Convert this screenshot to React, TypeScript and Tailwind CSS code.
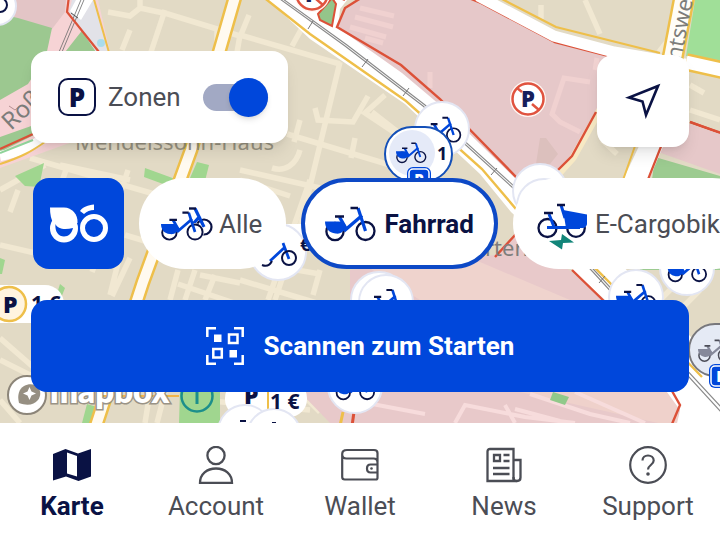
import React, { useState } from 'react';

const NAVY = '#0a1244';
const BLUE = '#0047db';

function Bike({ x, y, s = 1, dark = NAVY, blue = BLUE }: { x: number; y: number; s?: number; dark?: string; blue?: string }) {
  return (
    <g transform={`translate(${x} ${y}) scale(${s})`} fill="none" strokeWidth="2.3">
      <circle cx="10" cy="25.5" r="8.6" stroke={dark} />
      <circle cx="40.5" cy="25" r="9" stroke={dark} />
      <path d="M0 15.5h14c5 0 7 3 7.500 6.500l-3 3c-2 2-5 3-8 2.500C4 27 0 22 0 15.500Z" fill={blue} />
      <path d="M14.500 11 21 22.500M19 25 37 9.500" stroke={blue} strokeWidth="3.400" />
      <path d="M33 2 40.500 25" stroke={blue} strokeWidth="3.200" />
      <path d="M10 10.500h9M25.500 2h7.500" stroke={dark} strokeWidth="2.700" />
    </g>
  );
}

function Pin({ x, y, r = 27, bike = true, s = 0.72 }: { x: number; y: number; r?: number; bike?: boolean; s?: number }) {
  return (
    <g>
      <circle cx={x} cy={y} r={r} fill="#fff" stroke="#e3e6f3" strokeWidth="2" />
      {bike && <Bike x={x - 25 * s} y={y - 17 * s} s={s} />}
    </g>
  );
}

function NoParking({ x, y }: { x: number; y: number }) {
  return (
    <g>
      <circle cx={x} cy={y} r="18" fill="#fff7f3" />
      <circle cx={x} cy={y} r="15.500" fill="#fff" stroke="#e0533f" strokeWidth="2.500" />
      <path d={`M${x - 11} ${y - 11}l5 4M${x + 4} ${y + 5}l7 6`} stroke="#e0533f" strokeWidth="2.500" />
      <text x={x} y={y + 8} textAnchor="middle" fontSize="22" fontWeight="800" fill="#16205c" className="font-['Open_Sans',sans-serif]">P</text>
    </g>
  );
}

function Badge({ x, y }: { x: number; y: number }) {
  return (
    <g>
      <rect x={x - 12} y={y - 12} width="24" height="24" rx="6" fill={BLUE} />
      <rect x={x - 10} y={y - 10} width="20" height="20" rx="4" fill={BLUE} stroke="#fff" strokeWidth="1.500" />
      <text x={x} y={y + 6} textAnchor="middle" fontSize="15" fontWeight="800" fill="#fff" className="font-['Open_Sans',sans-serif]">P</text>
    </g>
  );
}

function CityMap() {
  return (
    <svg className="absolute inset-0 h-full w-full font-['Noto_Sans',sans-serif]" viewBox="0 0 720 423" preserveAspectRatio="xMidYMin slice" aria-hidden="true">
      <rect width="720" height="423" fill="#e2dac5" />

      {/* minor streets */}
      <g fill="none" stroke="#f1e8d2" strokeWidth="5.500">
        <path d="M108 12l22 4 10-8 28 6 72 22M165 10l-14 42M140 0v9M130 30l-8 20M217 30v22" />
        <path d="M240 35l100 29M340 62l-28 116-22 90M302 28l-10 18M249 15l-9 22M240 35l-12 70" />
        <path d="M315 108l3 12 35 2 15-26M385 95l-20 18 30 20M372 112l36 28M287 134l153 46M300 120l-6 22M355 138l-4 20M300 150c-4 15-15 22-28 18" />
        <path d="M585 0l15 34M541 5v14M676 30l-17 22M690 85l14 8M690 110l30 10M602 140l15 14" />
        <path d="M30 158l145 42M0 190l45-25M60 165l70 15M18 190l-8 22M66 170l-8 22M0 245l35 8M128 170l-20 60-16 42M0 338l40 35M0 360l32 16M0 400l20 23" />
        <path d="M125 235l20 6M130 258l-18 38M120 255l-10 40M178 270l-8 30M195 270l-10 30M178 284l65 22M215 275l-10 25M200 275l40 8" />
        <path d="M240 170l80 18M310 180l-42 120M240 180l50 16M240 280l80 24M285 270l-10 30M320 270l-7 25M250 262l70 12" />
        <path d="M200 400l110 10M150 392l-5 31M165 392l-8 31M300 392l20 20" />
        <path d="M690 270l-30 30M700 290l-20 20" />
      </g>

      {/* parks */}
      <g fill="#a0d68f">
        <path d="M15 176l29-13-5 24-14-1ZM145 168l33 12-4 8-30-11ZM197 162l12 3-5 20-14-7ZM0 258l5 2-3 14-2 0ZM60 284l5 4-4 10-6 2ZM180 390h40v33h-41ZM87 404l10 3-6 16h-9Z" />
      </g>

      {/* north-west district */}
      <path d="M0 0h98l12 52-10 80L0 168Z" fill="#f6d3d5" />
      <path d="M0 0h66l-1 12-13 17-52-15Z" fill="#e3c5c6" />
      <path d="M0 14l18 4 34 10-6 28-18 28-28 16Z" fill="#9cc890" />
      <path d="M84 28l18 20v8H62ZM0 137l34-12v10L0 152Z" fill="#9cc890" />
      <path d="M72 0h22l15 52H96L69 12Z" fill="#e2e2e8" />
      <path d="M76 0h17l-12 20-11-9Z" fill="#fff" />
      <path d="M83-5 59 52M86-5 62 52" fill="none" stroke="#6b6b6b" strokeWidth="0.800" />
      <path d="M71 13l7 5" stroke="#555" />
      <circle cx="101" cy="43" r="4" fill="#a9dcec" />
      <path d="M93-4l17 60" stroke="#eebf4a" strokeWidth="2" />
      <path d="M69-4l-2 16 32 40" fill="none" stroke="#dc5138" strokeWidth="2.200" />
      <path d="M0 156c20-4 30-8 50-22" fill="none" stroke="#fff" strokeWidth="10" />
      <path d="M0 149l33-15" fill="none" stroke="#dc5138" strokeWidth="2.200" />
      <path d="M0 153l33-13" fill="none" stroke="#8fd39a" strokeWidth="2" />
      <path d="M0 164c22-7 32-13 45-22" fill="none" stroke="#eebf4a" strokeWidth="2" />
      <path d="M9 106l6 4 6-5" fill="none" stroke="#b58f92" />

      {/* north-south avenue */}
      <g fill="none">
        <path d="M237-10 191 150l-48 132-49 150" stroke="#eebf4a" strokeWidth="15" />
        <path d="M237-10 191 150l-48 132-49 150" stroke="#fffaf0" strokeWidth="10" />
        <path d="M101 396h78" stroke="#f0b44b" strokeWidth="2" />
      </g>

      {/* restricted zones */}
      <path d="M495 255l25-26 85 71 85 92-14 31H395l-45-31V270Z" fill="#e8c9ca" />
      <path d="M360 262h120l90 38H420Z" fill="#efd3cd" />
      <path d="M300 392h380l-8 31H330Z" fill="#e8c9ca" />
      <path d="M520 392h158v31h-20Z" fill="#efd1cb" />
      <g fill="none" stroke="#f7dcdc" strokeWidth="4">
        <path d="M330 396l95 18M455 423l10-18 60 12 50 6M505 405l10 18M530 394l60 20 40 9M515 409l45 12M575 392l70 31" />
      </g>
      <path d="M553 392l16 5-4 8-15-5Z" fill="#90c98a" />
      <path d="M343 412l-3 14" stroke="#eebf4a" strokeWidth="3" />
      <path d="M354 412l-2 14" stroke="#dc5138" strokeWidth="3" />

      {/* railway corridor */}
      <path d="M262-6h90l-12 15-2 18 64 38 42 36 74 64 90 85 54 58 60 60v60h-46l4-18-16-22-59-88-94-88-31-38-75-70-95-65Z" fill="#fff" />
      <path d="M262-4 310 34l96 67 76 68 34 40 80 60 40 40 66 68" fill="none" stroke="#eebf4a" strokeWidth="2.400" />
      <path d="M273-6 345 46l78 60 90 82 80 84 128 140M276-6 347 45l78 60 90 82 80 84 127 137" fill="none" stroke="#8a8a8a" strokeWidth="1.100" />
      <path d="M313 21l-5 8M368 59l-6 8M409 88l-6 8M497 168l-6 7M605 276l-6 7M714 370l-6 6" stroke="#777" />

      <path d="M337 27l8-19 16-10h108l12 5 74 39 58 14v35l-41 68-20 22h-34l-78-76-38-32Z" fill="#e6c8c9" />
      <g fill="none" stroke="#f0d1d0" strokeWidth="5">
        <path d="M360 8l34 8M355 17l38 10M350 27l36 10M365 38l18 5M430 72v16M590 82l-26-4-12 36 8 8 20 10M597 58l-2 12" />
      </g>
      <path d="M540 138l6 0 12 16-8 10h-14Z" fill="#dcc0bd" />
      <path d="M601 108l-28 50-18 20" fill="none" stroke="#f7e9c4" strokeWidth="7" />
      <path d="M336-4 345 0M361-2l-16 10-8 19 64 38 39 34 78 80M469-2l12 5 74 39 54 14M596 112l-24 44-14 14-8 10M516 234l-21 23M572 270l36 35M672 391l8 14-8 19M690 122l30 11" fill="none" stroke="#dc5138" strokeWidth="2.400" />
      <path d="M318 14l14-16 4 6-4 22-12-6Z" fill="#94c58a" stroke="#dc5138" strokeWidth="2" />

      {/* eastern blocks */}
      <path d="M478-4 554 36l60 16 106 18" fill="none" stroke="#fff" strokeWidth="11" />
      <path d="M500-2l56 29 104 26" fill="none" stroke="#eebf4a" strokeWidth="2.200" />
      <path d="M695 0h25v62l-34-6Z" fill="#a0df98" />
      <path d="M690 55l28 5v4l-28-5Z" fill="#dcd6bd" />
      <path d="M684-2 671 66" stroke="#eebf4a" strokeWidth="22" />
      <path d="M684-2 671 66" stroke="#fffdf8" strokeWidth="17" />
      <path d="M686 62l36 8" stroke="#eebf4a" strokeWidth="18" />
      <path d="M686 62l36 8" stroke="#fff" strokeWidth="13" />
      <path d="M690 124l30 10v40l-62-22Z" fill="#e6c8c9" />
      <path d="M655 157l65 19v94h-80Z" fill="#9ccb90" />
      <path d="M640 144l-18 38h26l16-38Z" fill="#fff" />
      <path d="M635 146l-12 34" stroke="#eebf4a" strokeWidth="2" />
      <path d="M662 144l-15 38M690 122l32 11" stroke="#dc5138" strokeWidth="2.200" />

      {/* street labels */}
      <g fill="#7d7d7b">
        <text x="75" y="150" fontSize="22" fill="#96917f">Mendelssohn-Haus</text>
        <text x="485" y="256" fontSize="22">rten</text>
        <text transform="translate(11 131) rotate(-43)" fontSize="24">Roß</text>
        <text transform="translate(681 61) rotate(-79)" fontSize="22">ntswe</text>
      </g>

      {/* vehicle pins */}
      <circle cx="-3" cy="6" r="19" fill="#fff" stroke="#e3e6f3" strokeWidth="2" />
      <circle cx="0" cy="5" r="7" fill="none" stroke={NAVY} strokeWidth="2" />
      <NoParking x={312} y={-6} />
      <NoParking x={528} y={99} />
      <Pin x={442} y={129} s={0.75} />
      <rect x="385" y="127" width="67" height="54" rx="27" fill="#fff" stroke="#1450b8" strokeWidth="2" />
      <circle cx="412" cy="153" r="23" fill="#e5eaf8" />
      <Bike x={396} y={142} s={0.6} />
      <text x="437" y="160" fontSize="18" fontWeight="700" fill={NAVY}>1</text>
      <Badge x={419} y={179} />
      <Pin x={540} y={191} bike={false} />
      <Pin x={544} y={206} bike={false} />
      <rect x="280" y="224" width="40" height="26" fill="#fff" />
      <Pin x={278} y={252} r={28} bike={false} />
      <text x="300" y="251" fontSize="18" fontWeight="700" fill={NAVY}>€</text>
      <g fill="none">
        <path d="M270 261 284 248M283 243l6 16" stroke={BLUE} strokeWidth="2.800" />
        <path d="M262 265c5 2 8 0 10-4" stroke={NAVY} strokeWidth="2" />
        <circle cx="289" cy="258" r="7" stroke={NAVY} strokeWidth="2" />
      </g>
      <Pin x={379} y={300} r={28} bike={false} />
      <Pin x={386} y={302} s={0.8} />
      <Pin x={636} y={297} s={0.8} />
      <Pin x={687} y={268} s={0.78} />
      <Pin x={355} y={386} s={0.78} />
      <rect x="689" y="324" width="90" height="52" rx="26" fill="#e5eaf5" stroke="#77777c" strokeWidth="2" />
      <Bike x={698} y={339} s={0.65} dark="#4c4d58" blue="#85889a" />
      <Badge x={721} y={376} />

      {/* parking prices */}
      <rect x="-20" y="285" width="84" height="38" rx="19" fill="#fff" />
      <circle cx="9" cy="304" r="17" fill="#fff4e0" stroke="#eebf4a" strokeWidth="2.500" />
      <text x="3" y="313" fontSize="23" fontWeight="800" fill={NAVY} className="font-['Open_Sans',sans-serif]">P</text>
      <text x="31" y="311" fontSize="21" fontWeight="700" fill={NAVY}>1 €</text>
      <rect x="225" y="380" width="82" height="37" rx="18" fill="#fff" />
      <text x="244" y="404" fontSize="23" fontWeight="800" fill={NAVY} className="font-['Open_Sans',sans-serif]">P</text>
      <path d="M268 392v18" stroke="#eebf4a" strokeWidth="2" />
      <Pin x={245} y={432} bike={false} />
      <Pin x={274} y={436} bike={false} />
      <text x="270" y="409" fontSize="21" fontWeight="700" fill={NAVY}>1 €</text>
      <path d="M240 421h6M272 423h4" stroke={NAVY} strokeWidth="2" />

      {/* attribution */}
      <circle cx="27" cy="395" r="19" fill="#fff" stroke="#8c8579" strokeWidth="2" />
      <path d="M19 403c-2-8 0-14 5-17 5-3 11-2 14 1 3 4 3 9 0 13-4 5-11 6-19 3Z" fill="#968f82" />
      <path d="M29.500 387l2 4.500 4.500 2-4.500 2-2 4.500-2-4.500-4.500-2 4.500-2Z" fill="#fff" />
      <text x="50" y="403" fontSize="33" fontWeight="800" fill="#fff" stroke="#9a9386" strokeWidth="3" paintOrder="stroke" className="font-['Lato',sans-serif]">mapbox</text>
      <circle cx="197" cy="396" r="15.500" fill="none" stroke="#1c8f8b" strokeWidth="2.500" />
      <path d="M197 392v12" stroke="#1c8f8b" strokeWidth="3" />
    </svg>
  );
}

function BrandLogo() {
  return (
    <svg className="h-10 w-[58px]" viewBox="0 0 58 40" aria-hidden="true">
      <circle cx="14" cy="24.500" r="14" fill="#fff" />
      <path d="M0 3.500h14c8 0 14 7 13.500 15L22 26 4 20C1 16 0 10 0 3.500Z" fill="#fff" />
      <path d="M5.500 20c2 5 9 6 17.500 4-1 5-4.500 8.500-9 8.500C9 32.500 4.500 28 5.500 20Z" fill={BLUE} />
      <circle cx="44" cy="24" r="11.500" fill="none" stroke="#fff" strokeWidth="5" />
      <path d="M30 7C33 3 38 1 44 0.500V6c-4 0-7 1.500-10 4Z" fill="#fff" />
    </svg>
  );
}

function AllIcon() {
  return (
    <svg className="h-9 w-[52px] shrink-0" viewBox="0 0 52 36" fill="none" aria-hidden="true">
      <circle cx="43" cy="21" r="7.500" stroke={NAVY} strokeWidth="2.200" />
      <path d="M34 2.500l9 18.500M32 18l7-8" stroke={BLUE} strokeWidth="3.200" />
      <path d="M28 2.500h7" stroke={NAVY} strokeWidth="2.400" />
      <circle cx="34" cy="26" r="9" fill="#fff" />
      <Bike x={0} y={5} s={0.84} />
    </svg>
  );
}

function CargoIcon() {
  return (
    <svg className="mt-1 h-12 w-[52px] shrink-0" viewBox="0 0 52 48" fill="none" aria-hidden="true">
      <circle cx="10.500" cy="26" r="9" stroke={NAVY} strokeWidth="2.300" />
      <circle cx="39" cy="26" r="8.800" stroke={NAVY} strokeWidth="2.300" />
      <path d="M26 8l24 4.500v9c0 2.500-2 4.500-5 4.500H29Z" fill={BLUE} />
      <path d="M10 25.500h33" stroke={BLUE} strokeWidth="3.200" />
      <path d="M12 12l5 13M24 3l4 13" stroke={BLUE} strokeWidth="3" />
      <path d="M7 11h9M20 3h8" stroke={NAVY} strokeWidth="2.600" />
      <path d="M12 39l12-1 1-6 12 8.500-11 .5-1 6.500Z" fill="#128579" />
    </svg>
  );
}

function ScanIcon() {
  return (
    <svg className="h-[38px] w-[38px]" viewBox="0 0 38 38" fill="none" stroke="#fff" strokeWidth="2.500" aria-hidden="true">
      <path d="M1.300 10V1.300H10M28 1.300h8.700V10M36.700 28v8.700H28M10 36.700H1.300V28" />
      <path d="M8 7.500h7.500V15H8ZM23.500 23H31v7.500h-7.500Z" fill="#fff" stroke="none" />
      <path d="M23 7.500h8.500V16H23ZM7.300 22h8.500v8.500H7.300Z" />
    </svg>
  );
}

const navIcons = {
  map: (
    <svg className="size-[38px]" viewBox="0 0 38 38" aria-hidden="true">
      <path d="M0 8 12.500 3 25 7.500 38 3v27.500L25.500 35 13 30.500 0 34.500Z" fill={NAVY} />
      <path d="M14 6.500l10 3.500v20.500L14 27.500Z" fill="#fff" />
    </svg>
  ),
  user: (
    <svg className="size-[38px]" viewBox="0 0 38 38" fill="none" stroke="currentColor" strokeWidth="2.300" aria-hidden="true">
      <circle cx="19" cy="9.500" r="8.600" />
      <path d="M3 37c0-9 7-14.500 16-14.500S35 28 35 37Z" />
    </svg>
  ),
  wallet: (
    <svg className="size-[38px]" viewBox="0 0 38 38" fill="none" stroke="currentColor" strokeWidth="2.200" aria-hidden="true">
      <path d="M36.500 16V7c0-2-1.500-3-3.500-3H6C3 4 1.200 5.500 1.200 8v23c0 1.700 1 2.500 2.500 2.500H35c1 0 1.500-.7 1.500-1.700V16.500c0-2.500-1.500-4-4-4H5.500c-2.500 0-4.300-1-4.300-4" />
      <path d="M36.500 18.500h-7c-2 0-3.500 1-3.500 4s1.500 4 3.500 4h7" />
      <circle cx="30.500" cy="22.500" r="1.300" fill="currentColor" stroke="none" />
    </svg>
  ),
  news: (
    <svg className="size-[38px]" viewBox="0 0 38 38" fill="none" stroke="currentColor" strokeWidth="2.300" aria-hidden="true">
      <path d="M28.500 35V3H5C3.500 3 2.500 4 2.500 5.500V35H32c2 0 3.500-1.500 3.500-3.500V14h-7" />
      <path d="M28.500 31c0 2.500 1 4 3 4" />
      <path d="M9 9h6v6H9Z" />
      <path d="M18.500 9h6M18.500 15h6M8 22h16.500M8 28h16.500" />
    </svg>
  ),
  help: (
    <svg className="size-[38px]" viewBox="0 0 38 38" fill="none" stroke="currentColor" strokeWidth="2.200" aria-hidden="true">
      <circle cx="19" cy="19" r="17.800" />
      <path d="M13.500 14.500c0-3 2.500-5 5.500-5s5.700 2 5.700 5c0 4.500-5.700 4.500-5.700 9" />
      <circle cx="19" cy="28" r="1.800" fill="currentColor" stroke="none" />
    </svg>
  ),
};

const tabs = [
  { label: 'Karte', icon: navIcons.map },
  { label: 'Account', icon: navIcons.user },
  { label: 'Wallet', icon: navIcons.wallet },
  { label: 'News', icon: navIcons.news },
  { label: 'Support', icon: navIcons.help },
];

export default function App() {
  const [zones, setZones] = useState(true);

  return (
    <div className="flex min-h-screen flex-col overflow-hidden bg-white font-['Roboto',sans-serif] text-[26px] leading-8 text-[#4b4d55]">
      <main className="relative isolate overflow-hidden">
        <CityMap />
        <div className="relative flex flex-col gap-[31px] px-[31px] pt-[51px] pb-[31px]">
          <div className="flex h-24 justify-between">
            <label className="flex h-[92px] items-center rounded-2xl bg-white px-5 pl-[27px] shadow-lg">
              <span className="flex size-[38px] items-center justify-center rounded-[10px] border-[2.5px] border-[#0a1244] font-['Open_Sans',sans-serif] text-[26px] font-extrabold text-[#0a1244]">P</span>
              <span className="ml-3">Zonen</span>
              <input
                type="checkbox"
                checked={zones}
                onChange={(e) => setZones(e.target.checked)}
                className="relative ml-[22px] h-[39px] w-[65px] appearance-none before:absolute before:inset-x-0 before:inset-y-1.5 before:rounded-full before:bg-[#a2a9c4] after:absolute after:top-0 after:left-0 after:size-[39px] after:rounded-full after:bg-gray-100 after:shadow-md checked:after:left-[26px] checked:after:bg-[#0047db]"
              />
            </label>
            <button type="button" aria-label="Standort" className="flex size-[92px] items-center justify-center self-end rounded-2xl bg-white shadow-lg">
              <svg className="size-9" viewBox="0 0 36 36" fill="none" stroke={NAVY} strokeWidth="2.600" aria-hidden="true">
                <path d="M33 3 4 14.500 17.500 18.500 21 32Z" />
              </svg>
            </button>
          </div>

          <div className="-mr-[31px] flex h-[91px] gap-[15px] overflow-hidden pl-0.5 whitespace-nowrap">
            <button type="button" aria-label="nextbike" className="flex w-[91px] shrink-0 items-center justify-center rounded-2xl bg-[#0047db]">
              <BrandLogo />
            </button>
            <button type="button" className="flex shrink-0 items-center gap-1.5 rounded-full bg-white pr-6 pl-[22px]">
              <AllIcon />
              Alle
            </button>
            <button type="button" className="flex shrink-0 items-center gap-2 rounded-full border-4 border-[#0d49c6] bg-white px-5 font-bold text-[#0a1244]">
              <svg className="h-9 w-[51px] shrink-0" viewBox="0 0 51 36" aria-hidden="true">
                <Bike x={0} y={0} />
              </svg>
              Fahrrad
            </button>
            <button type="button" className="flex shrink-0 items-center gap-1.5 rounded-full bg-white px-6">
              <CargoIcon />
              E-Cargobike
            </button>
          </div>

          <button type="button" className="flex h-[92px] items-center justify-center gap-5 rounded-2xl bg-[#0047db] font-bold text-white">
            <ScanIcon />
            Scannen zum Starten
          </button>
        </div>
      </main>

      <nav className="relative grid grow grid-cols-5 bg-white pt-[23px] pb-4">
        {tabs.map((tab, i) => (
          <a
            key={tab.label}
            href={`#${tab.label.toLowerCase()}`}
            aria-current={i === 0 ? 'page' : undefined}
            className="flex flex-col items-center gap-1.5 aria-[current]:font-bold aria-[current]:text-[#0a1244]"
          >
            {tab.icon}
            {tab.label}
          </a>
        ))}
      </nav>
    </div>
  );
}
